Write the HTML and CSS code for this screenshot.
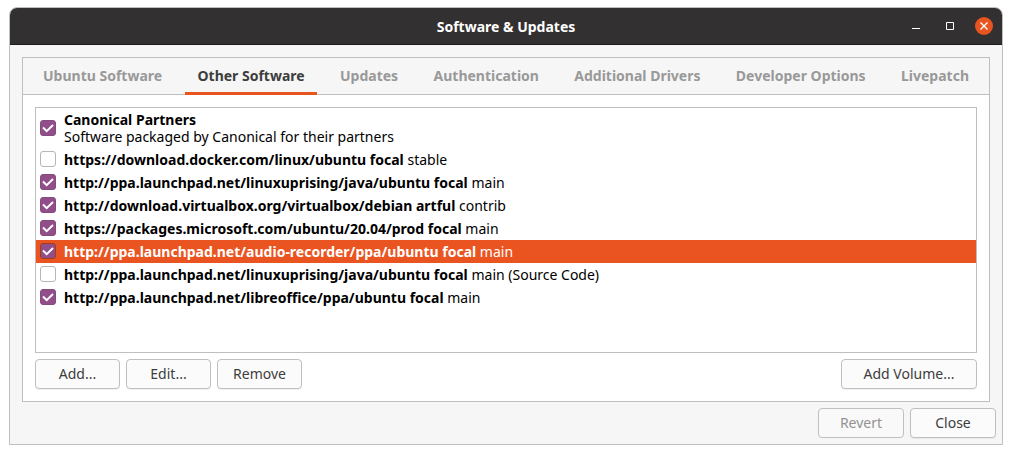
FILE: index.html
```
<!DOCTYPE html>
<html lang="en">
<head>
<meta charset="utf-8">
<title>Software &amp; Updates</title>
<link rel="stylesheet" href="styles.css">
</head>
<body>
<main class="window">
  <header class="titlebar">
    <h1 class="title">Software &amp; Updates</h1>
    <div class="controls">
      <button class="control" type="button" aria-label="Minimize"><svg width="18" height="18" viewBox="0 0 18 18"><path d="M5 11.5h8" stroke="#fff" fill="none"/></svg></button>
      <button class="control" type="button" aria-label="Maximize"><svg width="18" height="18" viewBox="0 0 18 18"><path d="M5.5 5.500h7v7h-7z" stroke="#fff" fill="none"/></svg></button>
      <button class="control control-close" type="button" aria-label="Close window"><svg width="18" height="18" viewBox="0 0 18 18"><path d="M5.500 5.500l7 7M12.500 5.500l-7 7" stroke="#fff" stroke-width="1.400" fill="none"/></svg></button>
    </div>
  </header>
  <div class="content">
    <section class="notebook">
      <nav class="tabs" role="tablist">
        <button class="tab" type="button" role="tab">Ubuntu Software</button>
        <button class="tab tab-active" type="button" role="tab" aria-selected="true">Other Software</button>
        <button class="tab" type="button" role="tab">Updates</button>
        <button class="tab" type="button" role="tab">Authentication</button>
        <button class="tab" type="button" role="tab">Additional Drivers</button>
        <button class="tab" type="button" role="tab">Developer Options</button>
        <button class="tab" type="button" role="tab">Livepatch</button>
      </nav>
      <div class="page">
        <ul class="sources">
          <li><label class="source source-tall"><span class="check"><input type="checkbox" checked><svg class="tick" viewBox="0 0 16 16"><path d="M3 7.500l3.700 3.700L13 5"/></svg></span><span class="text"><b>Canonical Partners</b><br>Software packaged by Canonical for their partners</span></label></li>
          <li><label class="source"><span class="check"><input type="checkbox"><svg class="tick" viewBox="0 0 16 16"><path d="M3 7.500l3.700 3.700L13 5"/></svg></span><span class="text"><b>https://download.docker.com/linux/ubuntu focal</b> stable</span></label></li>
          <li><label class="source"><span class="check"><input type="checkbox" checked><svg class="tick" viewBox="0 0 16 16"><path d="M3 7.500l3.700 3.700L13 5"/></svg></span><span class="text"><b>http://ppa.launchpad.net/linuxuprising/java/ubuntu focal</b> main</span></label></li>
          <li><label class="source"><span class="check"><input type="checkbox" checked><svg class="tick" viewBox="0 0 16 16"><path d="M3 7.500l3.700 3.700L13 5"/></svg></span><span class="text"><b>http://download.virtualbox.org/virtualbox/debian artful</b> contrib</span></label></li>
          <li><label class="source"><span class="check"><input type="checkbox" checked><svg class="tick" viewBox="0 0 16 16"><path d="M3 7.500l3.700 3.700L13 5"/></svg></span><span class="text"><b>https://packages.microsoft.com/ubuntu/20.04/prod focal</b> main</span></label></li>
          <li><label class="source source-selected"><span class="check"><input type="checkbox" checked><svg class="tick" viewBox="0 0 16 16"><path d="M3 7.500l3.700 3.700L13 5"/></svg></span><span class="text"><b>http://ppa.launchpad.net/audio-recorder/ppa/ubuntu focal</b> main</span></label></li>
          <li><label class="source"><span class="check"><input type="checkbox"><svg class="tick" viewBox="0 0 16 16"><path d="M3 7.500l3.700 3.700L13 5"/></svg></span><span class="text"><b>http://ppa.launchpad.net/linuxuprising/java/ubuntu focal</b> main (Source Code)</span></label></li>
          <li><label class="source"><span class="check"><input type="checkbox" checked><svg class="tick" viewBox="0 0 16 16"><path d="M3 7.500l3.700 3.700L13 5"/></svg></span><span class="text"><b>http://ppa.launchpad.net/libreoffice/ppa/ubuntu focal</b> main</span></label></li>
        </ul>
        <div class="actions">
          <button class="btn" type="button">Add...</button>
          <button class="btn" type="button">Edit...</button>
          <button class="btn" type="button">Remove</button>
          <button class="btn btn-volume" type="button">Add Volume...</button>
        </div>
      </div>
    </section>
  </div>
  <footer class="footer">
    <button class="btn" type="button" disabled>Revert</button>
    <button class="btn" type="button">Close</button>
  </footer>
</main>
</body>
</html>
```
FILE: styles.css
```
* {
  box-sizing: border-box;
}

body {
  margin: 0;
  min-height: 100vh;
  padding: 7px 9px 9px;
  display: flex;
  background: #fff;
  color: #000;
  font: 14px/17px "Noto Sans", "Open Sans", sans-serif;
}

button {
  font: inherit;
}

.window {
  flex: 1;
  display: flex;
  flex-direction: column;
  border: 1px solid #bfbfbf;
  border-radius: 8px 8px 0 0;
  background: #f6f6f6;
  overflow: hidden;
}

.titlebar {
  display: grid;
  grid-template-columns: 1fr auto 1fr;
  align-items: center;
  height: 37px;
  padding: 0 9px;
  border-bottom: 1px solid #1d1c1c;
  background: #323030;
  color: #fff;
}

.title {
  grid-column: 2;
  margin: 0;
  font-size: 14px;
  font-weight: 700;
}

.controls {
  display: flex;
  justify-content: flex-end;
  gap: 16px;
}

.control {
  display: flex;
  width: 18px;
  height: 18px;
  padding: 0;
  border: 0;
  border-radius: 50%;
  background: none;
}

.control-close {
  background: #e95420;
}

.content {
  flex: 1;
  display: flex;
  padding: 12px 12px 0;
}

.notebook {
  flex: 1;
  display: flex;
  flex-direction: column;
  border: 1px solid #bfbfbf;
  background: #fff;
}

.tabs {
  display: flex;
  justify-content: space-between;
  height: 37px;
  padding: 0 8px;
  border-bottom: 1px solid #bfbfbf;
  background: #f6f6f6;
}

.tab {
  height: 37px;
  padding: 1px 12px 0;
  border: 0;
  border-bottom: 3px solid transparent;
  background: none;
  color: #999;
  font-weight: 700;
  white-space: nowrap;
}

.tab-active {
  border-bottom-color: #e95420;
  color: #3d3d3d;
}

.page {
  flex: 1;
  display: flex;
  flex-direction: column;
  gap: 6px;
  padding: 12px;
}

.sources {
  flex: 1;
  margin: 0;
  padding: 0;
  border: 1px solid #bfbfbf;
  list-style: none;
}

.source {
  display: flex;
  align-items: center;
  gap: 8px;
  height: 23px;
  padding: 0 4px;
}

.source-tall {
  height: 40px;
}

.source-selected {
  background: #e95420;
  color: #fff;
}

.text b {
  font-weight: 700;
}

.check {
  display: grid;
  width: 16px;
  height: 17px;
}

.source-tall .check {
  height: 16px;
}

.check input,
.tick {
  grid-area: 1 / 1;
  width: 16px;
  height: 16px;
}

.check input {
  appearance: none;
  margin: 0;
  border: 1px solid #b6b6b6;
  border-radius: 3px;
  background: #fff;
}

.check input:checked {
  border-color: #864b7e;
  background: #924d8b;
}

.source-selected .check input:checked {
  border-color: #a63c17;
}

.tick {
  display: none;
  fill: none;
  stroke: #fff;
  stroke-width: 2;
  pointer-events: none;
}

input:checked + .tick {
  display: block;
}

.actions,
.footer {
  display: flex;
  gap: 6px;
}

.footer {
  justify-content: flex-end;
  padding: 6px;
}

.btn {
  min-width: 85px;
  height: 30px;
  padding: 0 15px 2px;
  border: 1px solid #bfbfbf;
  border-radius: 4px;
  background: #fbfbfb;
  box-shadow: 0 1px 1px #0000000f;
  color: #3d3d3d;
}

.footer .btn {
  min-width: 86px;
}

.btn:disabled {
  background: #f9f9f9;
  box-shadow: none;
  color: #929292;
}

.btn-volume {
  min-width: 136px;
  margin-left: auto;
}
```
